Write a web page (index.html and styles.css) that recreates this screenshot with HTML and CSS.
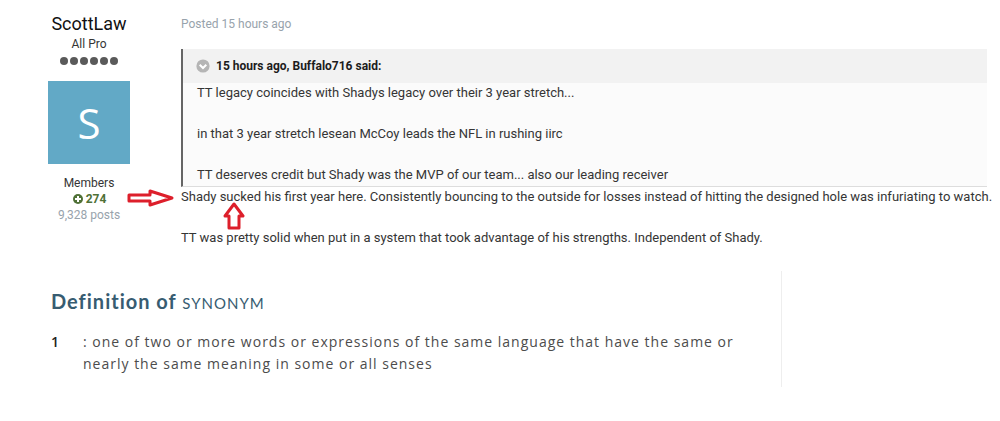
FILE: index.html
```html
<!DOCTYPE html>
<html lang="en">
<head>
    <meta charset="UTF-8">
    <meta name="viewport" content="width=device-width, initial-scale=1.0">
    <title>ScottLaw - Posted 15 hours ago</title>
    <link rel="stylesheet" href="styles.css">
</head>
<body>
    <article class="post">
        <aside class="author">
            <h3 class="author-name">ScottLaw</h3>
            <div class="author-title">All Pro</div>
            <div class="pips">
                <span class="pip"></span>
                <span class="pip"></span>
                <span class="pip"></span>
                <span class="pip"></span>
                <span class="pip"></span>
                <span class="pip"></span>
            </div>
            <div class="avatar">S</div>
            <div class="author-group">Members</div>
            <div class="reputation">
                <svg class="plus-icon" viewBox="0 0 12 12">
                    <circle cx="6" cy="6" r="5" fill="#4f7136"/>
                    <path d="M6 3v6M3 6h6" stroke="#fff" stroke-width="2"/>
                </svg>
                <span>274</span>
            </div>
            <div class="post-count">9,328 posts</div>
            <!-- Arrow pointing at the reply -->
            <svg class="arrow arrow-right" viewBox="0 0 48 20">
                <path d="M2 7H23V3L45 10L23 17V13H2Z"/>
            </svg>
        </aside>
        <div class="content">
            <div class="posted">Posted 15 hours ago</div>
            <blockquote class="quote">
                <div class="quote-header">
                    <svg class="quote-icon" viewBox="0 0 14 14">
                        <circle cx="7" cy="7" r="6.6" fill="#b5b5b5"/>
                        <path d="M3.7 5.7L7 9L10.3 5.7" fill="none" stroke="#fff" stroke-width="2"/>
                    </svg>
                    <span>15 hours ago, Buffalo716 said:</span>
                </div>
                <div class="quote-body">
                    <p>TT legacy coincides with Shadys legacy over their 3 year stretch...</p>
                    <p>in that 3 year stretch lesean McCoy leads the NFL in rushing iirc</p>
                    <p>TT deserves credit but Shady was the MVP of our team... also our leading receiver</p>
                </div>
            </blockquote>
            <div class="reply">
                <p>Shady sucked his first year here. Consistently bouncing to the outside for losses instead of hitting the designed hole was infuriating to watch.</p>
                <p>TT was pretty solid when put in a system that took advantage of his strengths. Independent of Shady.</p>
                <!-- Arrow pointing at "sucked" -->
                <svg class="arrow arrow-up" viewBox="0 0 22 28">
                    <path d="M11 2L20 14H16V26H6V14H2Z"/>
                </svg>
            </div>
        </div>
    </article>

    <section class="definition">
        <h2 class="definition-title">Definition of <span class="word">SYNONYM</span></h2>
        <div class="sense">
            <span class="sense-number">1</span>
            <p class="sense-text">: one of two or more words or expressions of the same language that have the same or nearly the same meaning in some or all senses</p>
        </div>
    </section>
</body>
</html>
```
FILE: styles.css
```css
body {
    margin: 0;
    background: #fff;
    font-family: Roboto, sans-serif;
    font-size: 13px;
    line-height: 20px;
    color: #353535;
}

h2, h3, p, blockquote {
    margin: 0;
}

.post {
    display: flex;
    gap: 40px;
    padding: 12px 0 0 37px;
}

/* Author column */
.author {
    position: relative;
    display: flex;
    flex-direction: column;
    align-items: center;
    flex: 0 0 104px;
    font-size: 12px;
    line-height: 16px;
}

.author-name {
    font-size: 18px;
    line-height: 24px;
    font-weight: 400;
    color: #111;
}

.pips {
    display: flex;
    gap: 2px;
    margin: 5px 0 16px;
}

.pip {
    width: 8px;
    height: 8px;
    border-radius: 50%;
    background: #5a5a5a;
}

.avatar {
    width: 82px;
    height: 83px;
    margin-bottom: 11px;
    background: #62a9c6;
    color: #fff;
    font-family: "Open Sans", sans-serif;
    font-size: 42px;
    line-height: 84px;
    text-align: center;
}

.reputation {
    display: flex;
    align-items: center;
    gap: 2px;
    color: #4f7136;
    font-weight: 700;
}

.plus-icon {
    width: 12px;
    height: 12px;
}

.post-count, .posted {
    color: #98a3ac;
}

/* Post column */
.content {
    flex: 1;
    min-width: 0;
}

.posted {
    margin-bottom: 13px;
    font-size: 12px;
    line-height: 24px;
}

.quote {
    margin-right: 13px;
    border-left: 2px solid #666;
    border-bottom: 1px solid #ddd;
    background: #fbfbfb;
}

.quote-header {
    display: flex;
    align-items: center;
    gap: 6px;
    height: 34px;
    padding-left: 13px;
    background: #f2f2f2;
    color: #1c1c1c;
    font-size: 12px;
    font-weight: 700;
}

.quote-icon {
    width: 14px;
    height: 14px;
}

.quote-body {
    padding: 0 0 1px 14px;
}

.quote-body p + p, .reply p + p {
    margin-top: 21px;
}

.reply {
    position: relative;
}

.arrow {
    position: absolute;
    fill: #fff;
    stroke: #dd1f2b;
    stroke-width: 3;
    stroke-linejoin: round;
}

.arrow-right {
    left: 90px;
    top: 176px;
    width: 48px;
    height: 20px;
}

.arrow-up {
    left: 42px;
    top: 15px;
    width: 22px;
    height: 28px;
}

/* Dictionary entry */
.definition {
    box-sizing: border-box;
    max-width: 782px;
    margin-top: 23px;
    padding: 16px 40px 12px 51px;
    border-right: 1px solid #eee;
    font-family: "Open Sans", sans-serif;
    font-size: 14px;
    line-height: 22px;
    letter-spacing: 1px;
    color: #4c4c4c;
}

.definition-title {
    margin-bottom: 14px;
    color: #375c71;
    font-family: Lato, sans-serif;
    font-size: 20px;
    line-height: 28px;
    font-weight: 700;
}

.word {
    font-size: 15px;
    font-weight: 400;
}

.sense {
    display: flex;
}

.sense-number {
    flex: 0 0 32px;
    color: #222;
    font-weight: 600;
}
```
